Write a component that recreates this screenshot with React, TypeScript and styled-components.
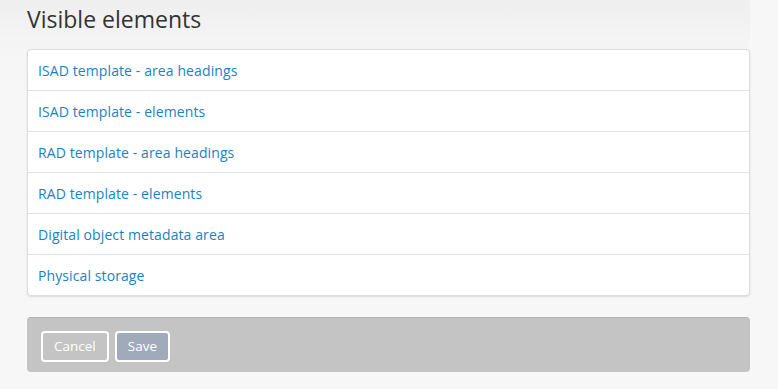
import React from 'react'
import styled, { createGlobalStyle } from 'styled-components'

const GlobalStyle = createGlobalStyle`
  html, body {
    margin: 0;
    padding: 0;
    background: #f7f7f7;
    font-family: "Open Sans", "Liberation Sans", sans-serif;
  }
`

const Page = styled.div`
  width: 778px;
  height: 389px;
  overflow: hidden;
  background: #f7f7f7;
`

const Content = styled.div`
  width: 723px;
  padding: 0 0 0 27px;
  margin-right: 28px;
  background: linear-gradient(to bottom, #efefef 0px, #f6f6f6 60px, #f7f7f7 100px);
  box-sizing: content-box;
`

const Title = styled.h1`
  margin: 0;
  padding: 4px 0 0 0;
  height: 45px;
  font-size: 23px;
  font-weight: 400;
  color: #333;
  line-height: 30px;
`

const List = styled.div`
  background: #fff;
  border: 1px solid #ddd;
  border-radius: 4px;
  box-shadow: 0 1px 2px rgba(0, 0, 0, 0.12);
  display: flex;
  flex-direction: column;
`

const Item = styled.a`
  display: flex;
  align-items: center;
  height: 40px;
  padding: 0 10px;
  font-size: 14px;
  letter-spacing: 0.1px;
  color: #1a82c3;
  text-decoration: none;
  border-top: 1px solid #e2e2e2;
  &:first-child {
    border-top: none;
  }
`

const Actions = styled.div`
  margin-top: 21px;
  height: 55px;
  box-sizing: border-box;
  padding: 2px 14px 0;
  background: #c4c4c4;
  border-top: 1px solid #b3b3b3;
  border-radius: 4px;
  display: flex;
  align-items: center;
  gap: 6px;
`

const Button = styled.button<{ $primary?: boolean }>`
  height: 31px;
  padding: 0 11px;
  border: 2px solid #fff;
  border-radius: 4px;
  background: ${p => (p.$primary ? '#a1aaba' : 'transparent')};
  color: #fff;
  font-family: inherit;
  font-size: 13.5px;
  cursor: pointer;
`

const items = [
  'ISAD template - area headings',
  'ISAD template - elements',
  'RAD template - area headings',
  'RAD template - elements',
  'Digital object metadata area',
  'Physical storage',
]

const App = () => (
  <Page>
    <GlobalStyle />
    <Content>
      <Title>Visible elements</Title>
      <List>
        {items.map(label => (
          <Item key={label} href="#">{label}</Item>
        ))}
      </List>
      <Actions>
        <Button>Cancel</Button>
        <Button $primary>Save</Button>
      </Actions>
    </Content>
  </Page>
)

export default App
